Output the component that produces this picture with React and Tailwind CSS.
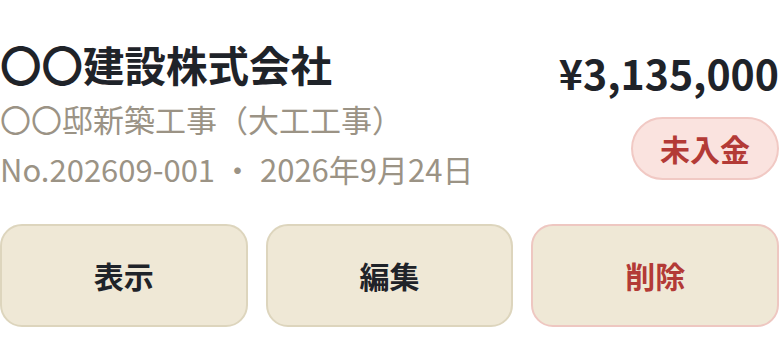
import React from 'react';

const font = { fontFamily: '"Noto Sans CJK JP", "Noto Sans", sans-serif' };

const ActionButton = ({ label, danger }) => (
  <button
    className={`flex-1 h-[103px] rounded-[22px] border-2 bg-[#efe8d6] text-[30px] font-bold ${
      danger ? 'border-[#eec7c1] text-[#b33a36]' : 'border-[#ddd5bd] text-[#1f2329]'
    }`}
  >
    {label}
  </button>
);

export default function App() {
  return (
    <div className="w-[780px] h-[359px] bg-white overflow-hidden pr-[1px]" style={font}>
      <div className="flex justify-between pt-[34px]">
        <div className="flex flex-col">
          <h1 className="text-[41.5px] leading-[60px] font-bold text-[#1f2329]">〇〇建設株式会社</h1>
          <p className="text-[31px] leading-[50px] text-[#9b9385]">〇〇邸新築工事（大工工事）</p>
          <p className="text-[31px] leading-[50px] text-[#9b9385]">No.202609-001 ・ 2026年9月24日</p>
        </div>
        <div className="flex flex-col items-end pt-[9px]">
          <div className="text-[41px] leading-[58px] font-bold text-[#1f2329]">¥3,135,000</div>
          <div className="mt-[16px] h-[63px] px-[27px] flex items-center rounded-full border-2 border-[#f1c9c4] bg-[#fae3df] text-[30px] font-bold text-[#b33a36]">
            未入金
          </div>
        </div>
      </div>
      <div className="flex gap-[18px] mt-[30px]">
        <ActionButton label="表示" />
        <ActionButton label="編集" />
        <ActionButton label="削除" danger />
      </div>
    </div>
  );
}
